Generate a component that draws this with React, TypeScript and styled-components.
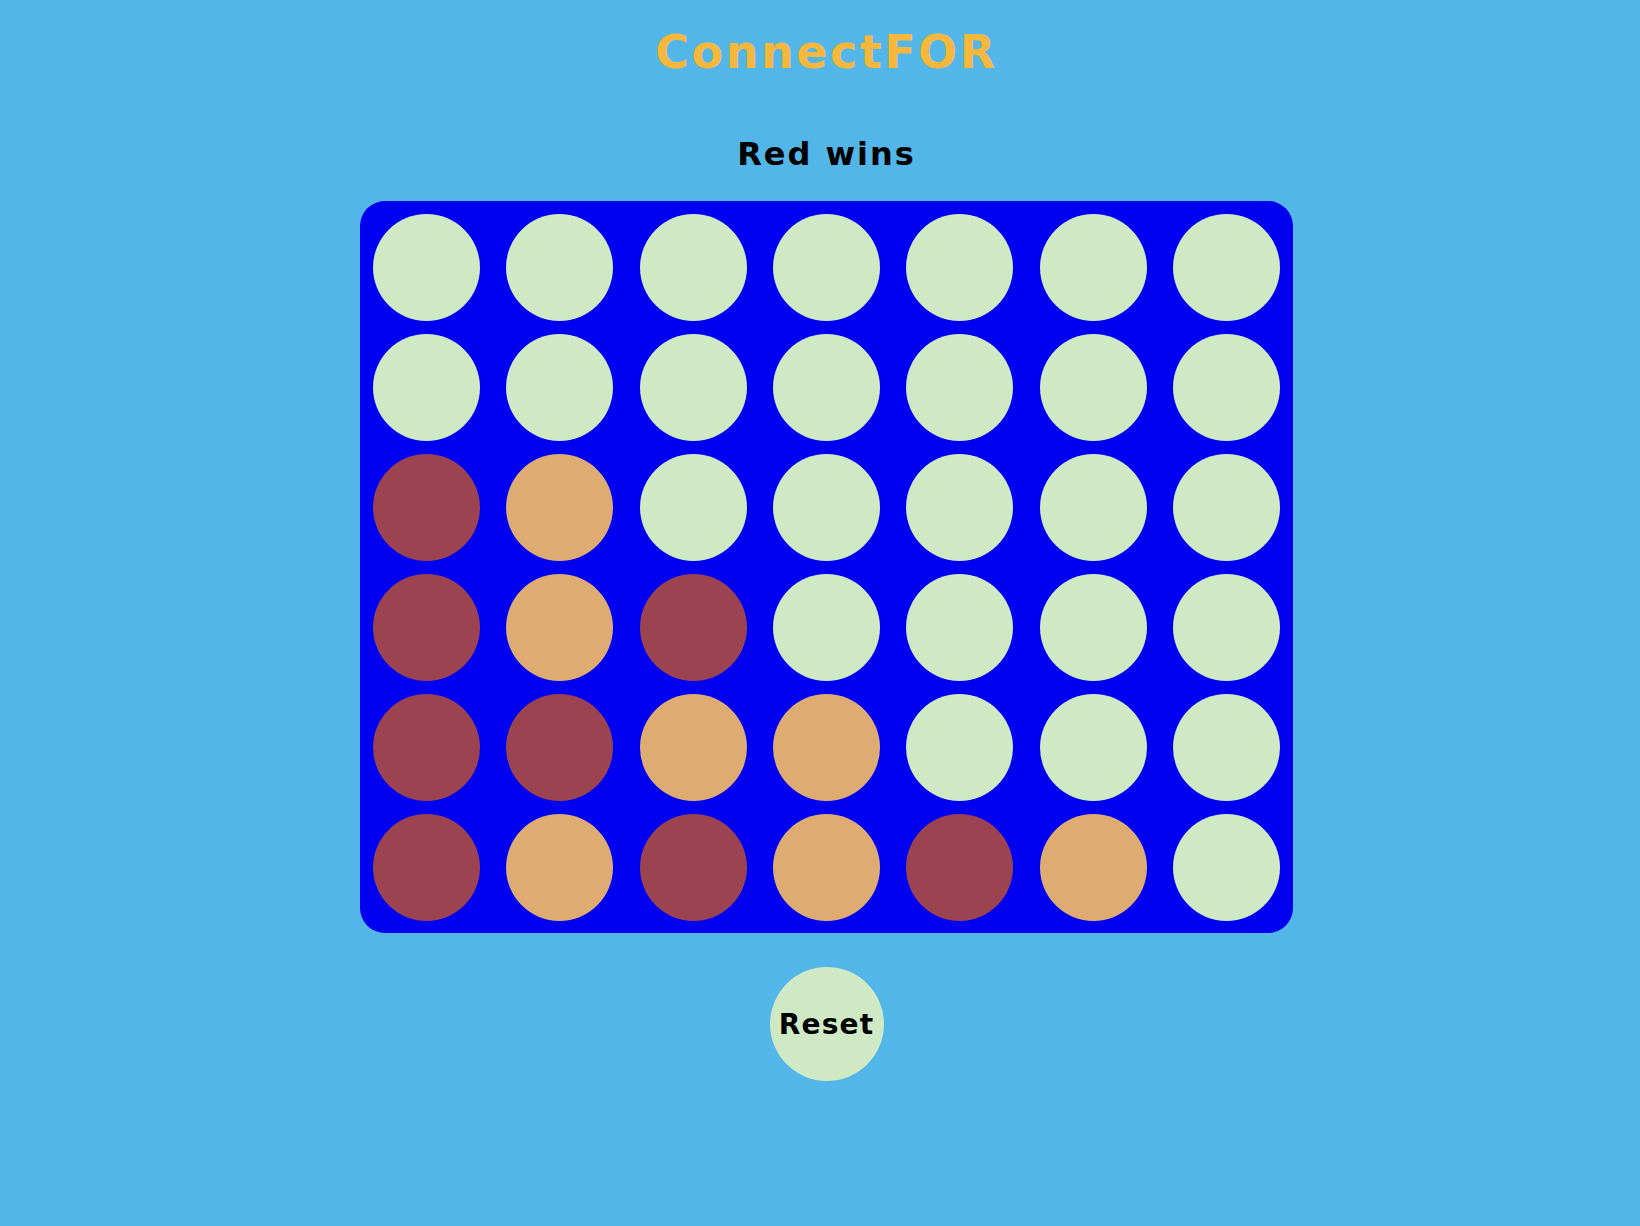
import React from "react";
import styled, { createGlobalStyle } from "styled-components";

const GlobalStyle = createGlobalStyle`
  html, body {
    margin: 0;
    padding: 0;
    background: #53b6e8;
  }
  body {
    font-family: "DejaVu Sans", "Liberation Sans", sans-serif;
    min-height: 1226px;
  }
`;

const Page = styled.div`
  display: flex;
  flex-direction: column;
  align-items: center;
  padding: 0 0 0 13px;
`;

const Title = styled.h1`
  margin: 26px 0 0;
  font-size: 46px;
  line-height: 52px;
  font-weight: 700;
  letter-spacing: 2.5px;
  color: #f5b83d;
`;

const Status = styled.h2`
  margin: 57px 0 0;
  font-size: 32px;
  line-height: 38px;
  font-weight: 700;
  letter-spacing: 2px;
  color: #000;
`;

const Board = styled.div`
  margin-top: 28px;
  width: 933px;
  box-sizing: border-box;
  padding: 6px 0;
  background: #0000f0;
  border-radius: 25px;
  display: grid;
  grid-template-columns: repeat(7, 1fr);
  grid-auto-rows: 120px;
`;

const Cell = styled.div`
  display: flex;
  align-items: center;
  justify-content: center;
`;

type Disc = "E" | "R" | "Y";

const discColors: Record<Disc, string> = {
  E: "#cfe9c5",
  R: "#9b4350",
  Y: "#deab72",
};

const Piece = styled.div<{ $disc: Disc }>`
  width: 107px;
  height: 107px;
  border-radius: 50%;
  background: ${(p) => discColors[p.$disc]};
`;

const ResetButton = styled.button`
  margin-top: 34px;
  width: 114px;
  height: 114px;
  border-radius: 50%;
  border: none;
  background: #cfe9c5;
  color: #000;
  font-family: "DejaVu Sans", "Liberation Sans", sans-serif;
  font-size: 28px;
  font-weight: 700;
  letter-spacing: 1.2px;
  padding: 0;
  cursor: pointer;
`;

const grid: Disc[][] = [
  ["E", "E", "E", "E", "E", "E", "E"],
  ["E", "E", "E", "E", "E", "E", "E"],
  ["R", "Y", "E", "E", "E", "E", "E"],
  ["R", "Y", "R", "E", "E", "E", "E"],
  ["R", "R", "Y", "Y", "E", "E", "E"],
  ["R", "Y", "R", "Y", "R", "Y", "E"],
];

export default function App() {
  return (
    <>
      <GlobalStyle />
      <Page>
        <Title>ConnectFOR</Title>
        <Status>Red wins</Status>
        <Board>
          {grid.map((row, r) =>
            row.map((d, c) => (
              <Cell key={`${r}-${c}`}>
                <Piece $disc={d} />
              </Cell>
            ))
          )}
        </Board>
        <ResetButton>Reset</ResetButton>
      </Page>
    </>
  );
}
